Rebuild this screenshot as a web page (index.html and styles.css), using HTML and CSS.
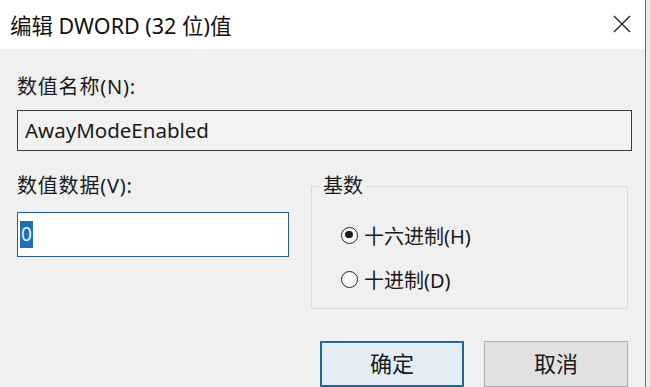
FILE: index.html
```html
<!DOCTYPE html>
<html lang="zh-CN">
<head>
<meta charset="utf-8">
<title>编辑 DWORD (32 位)值</title>
<link rel="stylesheet" href="styles.css">
</head>
<body>
<div class="screen">
  <div class="dialog">
    <div class="titlebar">
      <span class="title">编辑 DWORD (32 位)值</span>
      <svg class="close" width="18" height="18" viewBox="0 0 18 18"><path d="M1 1 L17 17 M17 1 L1 17" stroke="#222" stroke-width="1.4" fill="none"/></svg>
    </div>
    <div class="content">
      <div class="label">数值名称(N):</div>
      <div class="namebox">AwayModeEnabled</div>
      <div class="row">
        <div class="leftcol">
          <div class="label label2">数值数据(V):</div>
          <div class="databox"><span class="sel">0</span></div>
        </div>
        <div class="group">
          <div class="legend">基数</div>
          <div class="radio"><span class="circle checked"></span><span>十六进制(H)</span></div>
          <div class="radio"><span class="circle"></span><span>十进制(D)</span></div>
        </div>
      </div>
      <div class="buttons">
        <div class="btn primary">确定</div>
        <div class="btn">取消</div>
      </div>
    </div>
  </div>
  <div class="edge"></div>
</div>
</body>
</html>
```
FILE: styles.css
```css
html, body {
  margin: 0;
  padding: 0;
}
body {
  width: 650px;
  height: 387px;
  overflow: hidden;
  background: #f0f0f0;
  font-family: "Noto Sans", "Noto Sans CJK SC", sans-serif;
  color: #1a1a1a;
}
.screen {
  display: flex;
  width: 650px;
  height: 387px;
}
.dialog {
  width: 645px;
  display: flex;
  flex-direction: column;
  background: #f0f0f0;
}
.edge {
  width: 4px;
  border-left: 1px solid #6a6a6a;
  background: #ececec;
}
.titlebar {
  height: 50px;
  background: #ffffff;
  display: flex;
  align-items: center;
  justify-content: space-between;
  padding: 0 14px 0 10px;
  box-sizing: border-box;
}
.title {
  font-size: 21.5px;
  color: #111;
}
.close {
  margin-top: -2px;
}
.content {
  padding: 25px 0 0 17px;
  display: flex;
  flex-direction: column;
}
.label {
  font-size: 20px;
  line-height: 26px;
  height: 26px;
  letter-spacing: 0.8px;
}
.namebox {
  margin-top: 10px;
  width: 615px;
  height: 41px;
  box-sizing: border-box;
  border: 1px solid #3c3c3c;
  background: #f2f2f2;
  font-size: 20.5px;
  line-height: 38px;
  padding-left: 7px;
}
.row {
  display: flex;
  margin-top: 22px;
}
.leftcol {
  width: 272px;
  display: flex;
  flex-direction: column;
}
.databox {
  margin-top: 13px;
  height: 45px;
  box-sizing: border-box;
  border: 1px solid #2d5d80;
  background: #ffffff;
  padding: 8px 0 0 2px;
}
.sel {
  display: inline-block;
  background: #1f6fb8;
  color: #e8f2ff;
  font-size: 19px;
  line-height: 27px;
  padding: 0 1px;
}
.group {
  margin-left: 22px;
  margin-top: 13px;
  width: 317px;
  height: 123px;
  box-sizing: border-box;
  border: 1px solid #dadada;
  position: relative;
  padding: 33px 0 0 29px;
}
.legend {
  position: absolute;
  top: -14px;
  left: 8px;
  padding: 0 3px;
  background: #f0f0f0;
  font-size: 20px;
  line-height: 26px;
}
.radio {
  display: flex;
  align-items: center;
  font-size: 20px;
  height: 30px;
  margin-bottom: 14px;
}
.circle {
  flex: 0 0 auto;
  box-sizing: border-box;
  width: 17px;
  height: 17px;
  border: 1.6px solid #222;
  border-radius: 50%;
  margin-right: 6px;
  position: relative;
  background: #fafafa;
}
.circle.checked::after {
  content: "";
  position: absolute;
  left: 3.2px;
  top: 3.2px;
  width: 7.4px;
  height: 7.4px;
  border-radius: 50%;
  background: #1a1a1a;
}
.buttons {
  display: flex;
  margin-top: 32px;
  margin-left: 303px;
  gap: 20px;
}
.btn {
  width: 144px;
  height: 46px;
  box-sizing: border-box;
  border: 1px solid #adadad;
  background: #e1e1e1;
  font-size: 22px;
  text-align: center;
  line-height: 40px;
  font-family: "Noto Sans CJK SC", sans-serif;
}
.btn.primary {
  border: 2px solid #1f6a9e;
  background: #e3edf5;
  line-height: 38px;
}
```
